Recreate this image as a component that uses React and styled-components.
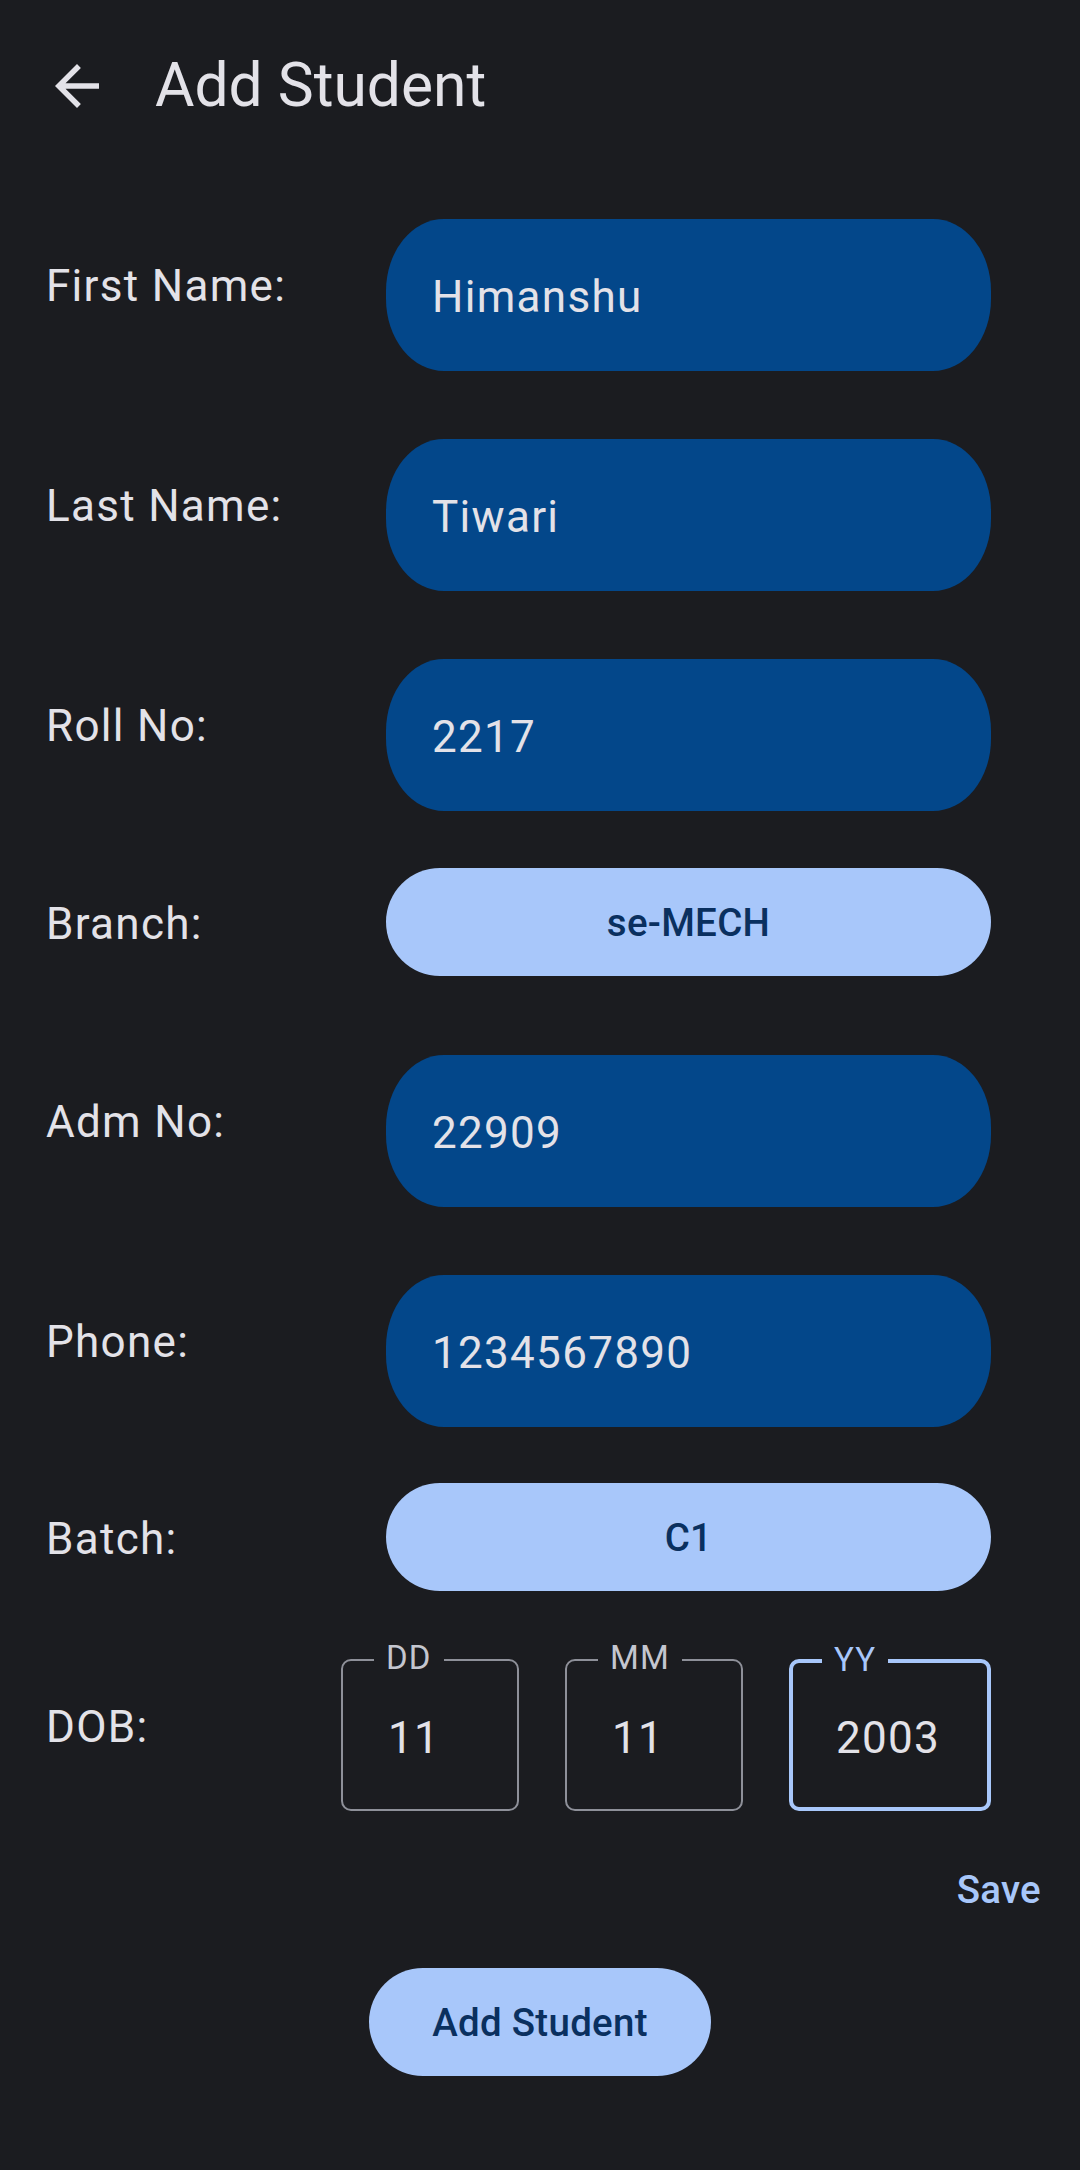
import styled, { createGlobalStyle } from 'styled-components'

const GlobalStyle = createGlobalStyle`
  html, body {
    margin: 0;
    padding: 0;
    background: #1b1c20;
  }
  * { box-sizing: border-box; }
`

const colors = {
  bg: '#1b1c20',
  onBg: '#e3e2e8',
  field: '#03478a',
  primary: '#a8c7fa',
  onPrimary: '#0a305f',
  outline: '#8e9099',
  outlineLabel: '#c4c6cf',
}

const Screen = styled.div`
  min-height: 2170px;
  background: ${colors.bg};
  color: ${colors.onBg};
  font-family: Roboto, 'Noto Sans', sans-serif;
`

const TopBar = styled.header`
  height: 172px;
  display: flex;
  align-items: center;
  padding: 0 0 0 44px;
`

const BackButton = styled.button`
  width: 66px;
  height: 66px;
  padding: 0;
  border: none;
  background: none;
  color: ${colors.onBg};
  display: flex;
`

const Title = styled.h1`
  margin: 0 0 0 45px;
  font-size: 60.5px;
  font-weight: 400;
  line-height: 1.2;
  color: ${colors.onBg};
`

const Form = styled.div`
  padding: 0 89px 0 46px;
  display: flex;
  flex-direction: column;
`

const Row = styled.div`
  display: flex;
  align-items: center;
  justify-content: space-between;
  margin-top: ${p => p.$top}px;
`

const Label = styled.div`
  font-size: 44px;
  letter-spacing: 1.3px;
  line-height: 1.17;
  padding-bottom: ${p => p.$lift || 0}px;
  padding-top: ${p => p.$drop || 0}px;
`

const Field = styled.div`
  width: 605px;
  height: 152px;
  border-radius: 58px / 72px;
  background: ${colors.field};
  display: flex;
  align-items: center;
  padding: 4px 46px 0;
  font-size: 44px;
  letter-spacing: 1.3px;
  color: ${colors.onBg};
`

const PillButton = styled.button`
  width: ${p => p.$width || 605}px;
  height: 108px;
  border: none;
  border-radius: 54px;
  background: ${colors.primary};
  color: ${colors.onPrimary};
  font-family: Roboto, 'Noto Sans', sans-serif;
  font-size: 38.5px;
  font-weight: 500;
  letter-spacing: 0.275px;
  padding: 0;
`

const DateGroup = styled.div`
  display: flex;
  gap: 46px;
`

const DateBox = styled.div`
  position: relative;
  width: ${p => p.$width}px;
  height: 152px;
  border: ${p => (p.$focused ? `4px solid ${colors.primary}` : `2px solid ${colors.outline}`)};
  border-radius: 10px;
  display: flex;
  align-items: center;
  padding: 6px 0 0 ${p => (p.$focused ? 43 : 45)}px;
  font-size: 44px;
  letter-spacing: 1.3px;
  color: ${colors.onBg};
`

const DateLabel = styled.span`
  position: absolute;
  top: -22px;
  left: ${p => (p.$focused ? 29 : 31)}px;
  padding: 0 12px;
  background: ${colors.bg};
  font-size: 33px;
  letter-spacing: 1.1px;
  line-height: 1.17;
  color: ${p => (p.$focused ? colors.primary : colors.outlineLabel)};
`

const SaveRow = styled.div`
  display: flex;
  justify-content: flex-end;
  margin: 56px -50px 0 0;
`

const TextButton = styled.button`
  border: none;
  background: none;
  padding: 0;
  color: ${colors.primary};
  font-family: Roboto, 'Noto Sans', sans-serif;
  font-size: 38.5px;
  font-weight: 500;
  letter-spacing: 0.275px;
  line-height: 1.17;
`

const Footer = styled.div`
  display: flex;
  justify-content: center;
  margin-top: 56px;
`

const ArrowBack = () => (
  <svg width="66" height="66" viewBox="0 0 24 24" fill="currentColor">
    <path d="M20 11H7.83l5.59-5.59L12 4l-8 8 8 8 1.41-1.41L7.83 13H20v-2z" />
  </svg>
)

const TextRow = ({ top, label, value }) => (
  <Row $top={top}>
    <Label $lift={16}>{label}</Label>
    <Field>{value}</Field>
  </Row>
)

const SelectRow = ({ top, label, value }) => (
  <Row $top={top}>
    <Label $drop={6}>{label}</Label>
    <PillButton>{value}</PillButton>
  </Row>
)

const dateParts = [
  { label: 'DD', value: '11', width: 178 },
  { label: 'MM', value: '11', width: 178 },
  { label: 'YY', value: '2003', width: 202, focused: true },
]

export default function App() {
  return (
    <>
      <GlobalStyle />
      <Screen>
        <TopBar>
          <BackButton aria-label="Back">
            <ArrowBack />
          </BackButton>
          <Title>Add Student</Title>
        </TopBar>
        <Form>
          <TextRow top={47} label="First Name:" value="Himanshu" />
          <TextRow top={68} label="Last Name:" value="Tiwari" />
          <TextRow top={68} label="Roll No:" value="2217" />
          <SelectRow top={57} label="Branch:" value="se-MECH" />
          <TextRow top={79} label="Adm No:" value="22909" />
          <TextRow top={68} label="Phone:" value="1234567890" />
          <SelectRow top={56} label="Batch:" value="C1" />
          <Row $top={68}>
            <Label $lift={14}>DOB:</Label>
            <DateGroup>
              {dateParts.map(d => (
                <DateBox key={d.label} $width={d.width} $focused={d.focused}>
                  <DateLabel $focused={d.focused}>{d.label}</DateLabel>
                  {d.value}
                </DateBox>
              ))}
            </DateGroup>
          </Row>
          <SaveRow>
            <TextButton>Save</TextButton>
          </SaveRow>
        </Form>
        <Footer>
          <PillButton $width={342}>Add Student</PillButton>
        </Footer>
      </Screen>
    </>
  )
}
